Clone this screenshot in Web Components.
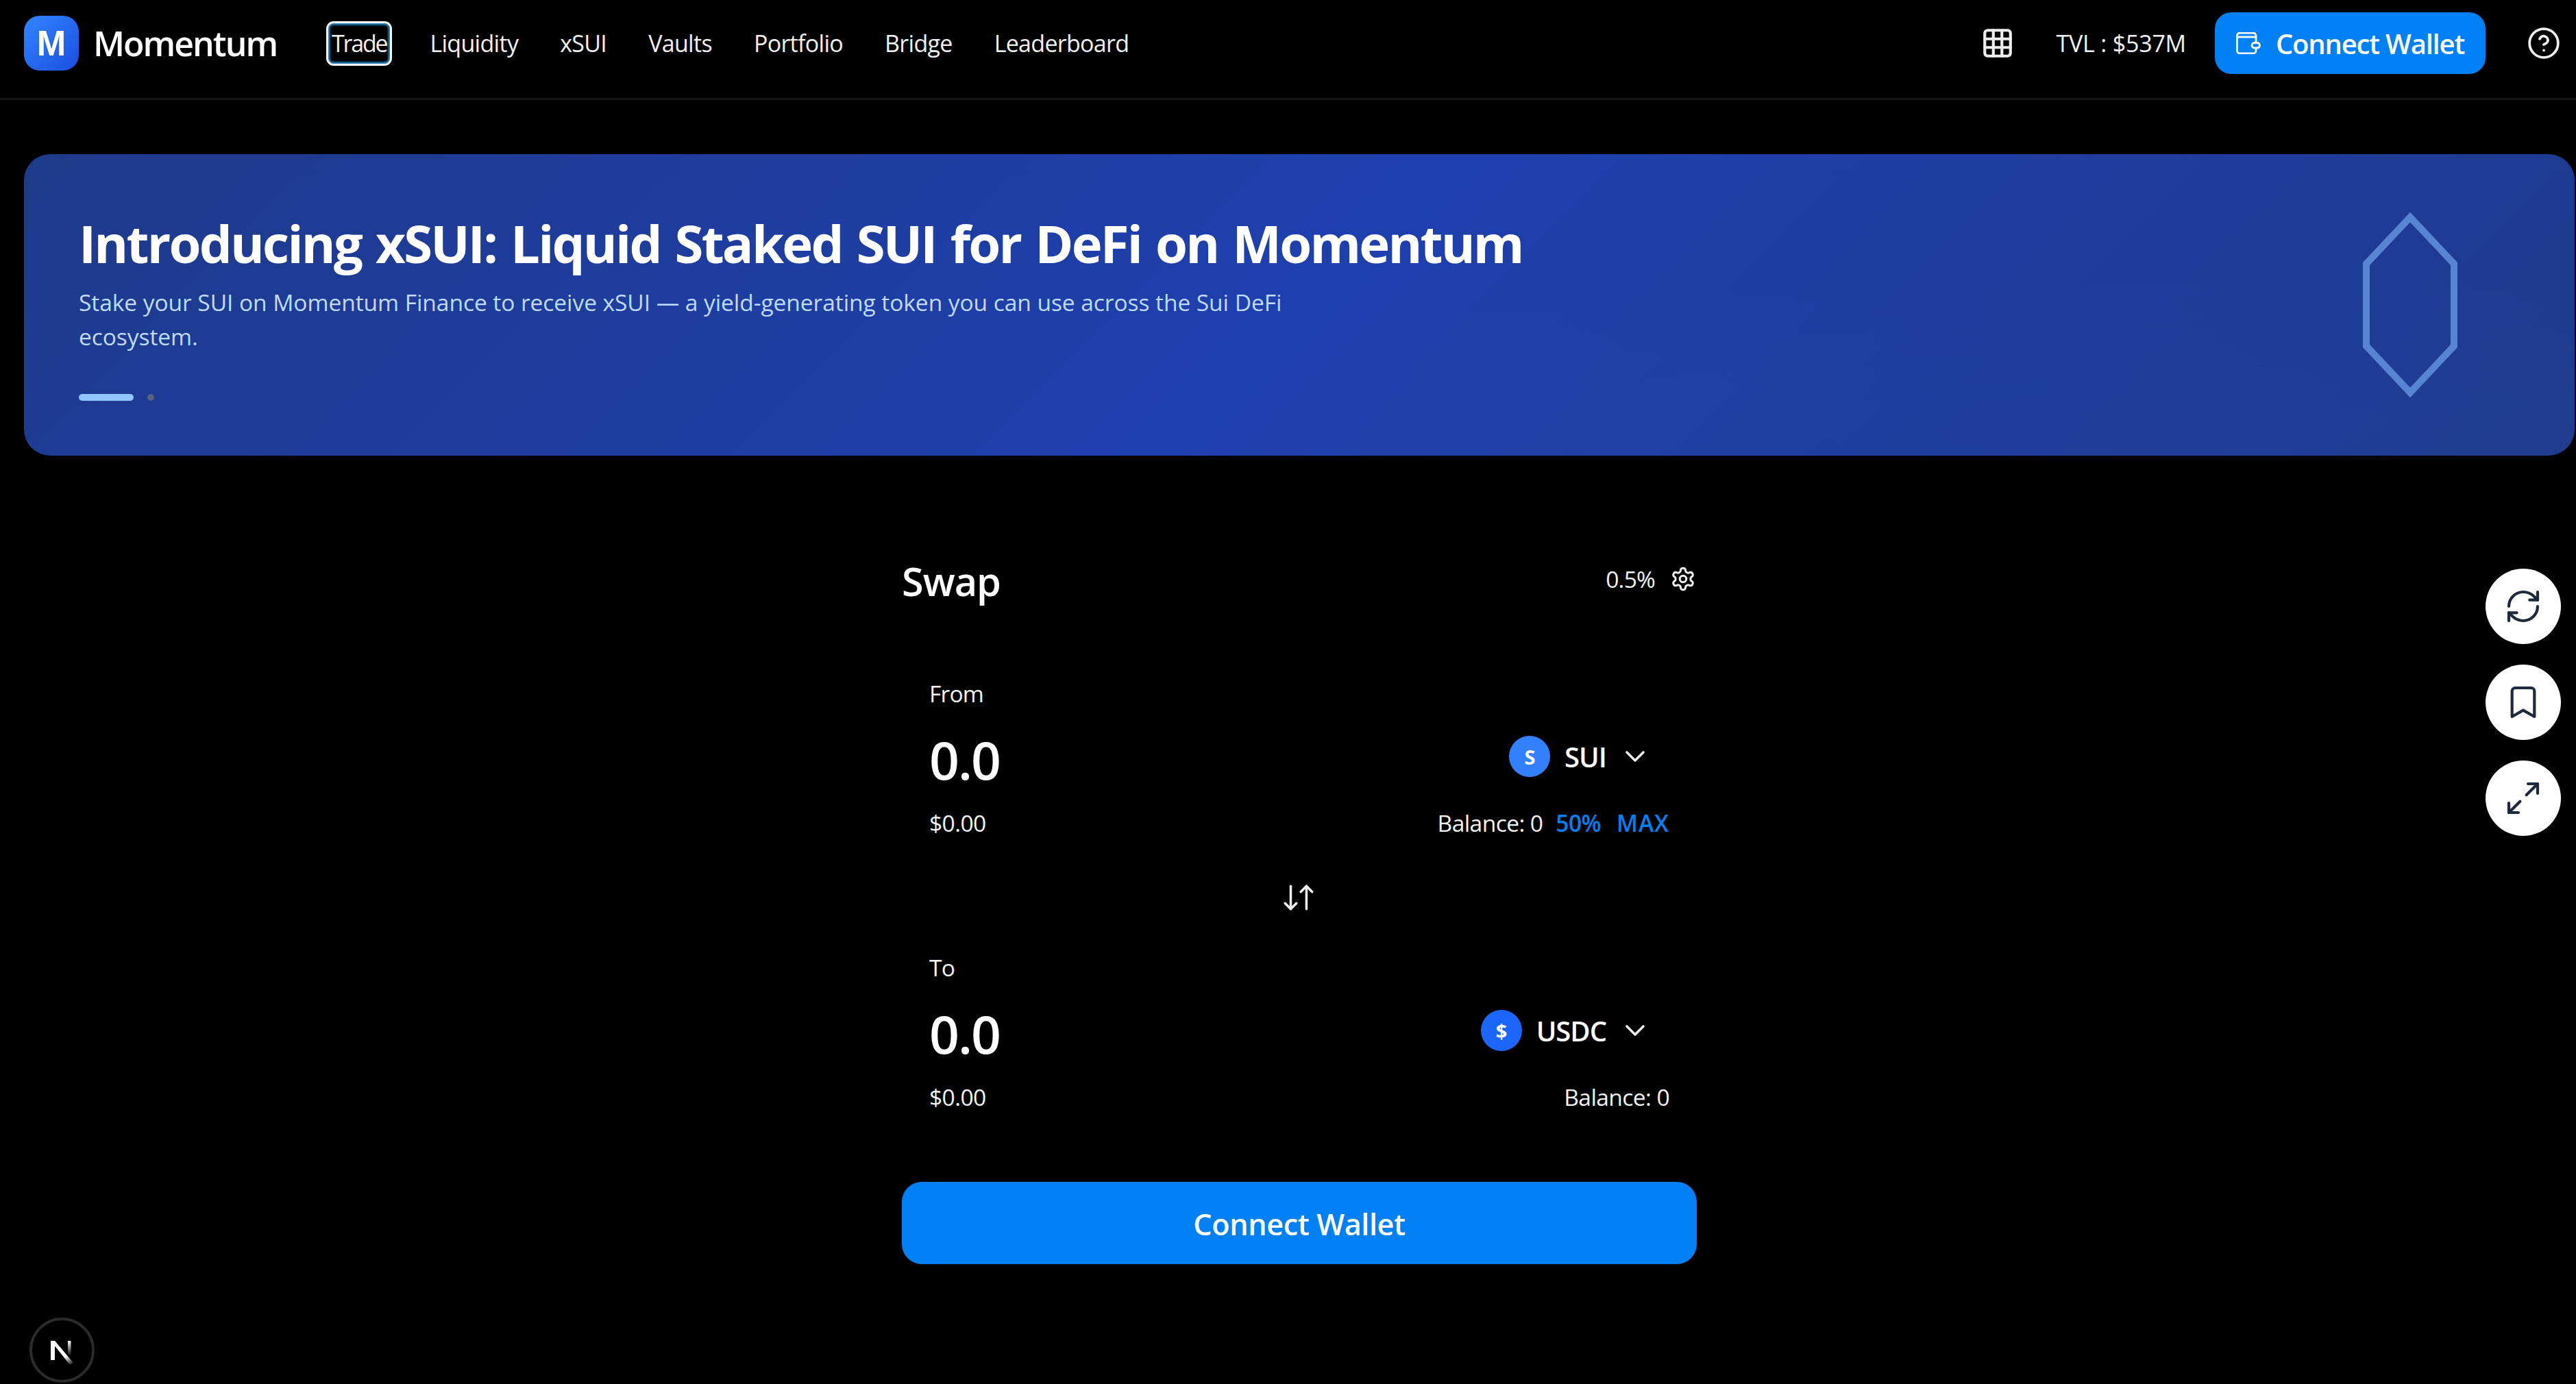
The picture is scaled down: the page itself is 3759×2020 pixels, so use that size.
<!DOCTYPE html>
<html>
<head>
<meta charset="utf-8">
<title>Momentum</title>
<style>
  html, body { margin: 0; height: 100%; background: #000; color: #fff; overflow: hidden; }
  body { font-family: "Open Sans", "Noto Sans", sans-serif; }
</style>
</head>
<body>
<app-header></app-header>
<promo-banner></promo-banner>
<swap-card></swap-card>
<side-tools></side-tools>
<dev-badge></dev-badge>

<script>
// small helper so every icon shares the same svg attributes
const icon = (size, body, width = 2) => `<svg xmlns="http://www.w3.org/2000/svg" width="${size}" height="${size}" viewBox="0 0 24 24" fill="none" stroke="currentColor" stroke-width="${width}" stroke-linecap="round" stroke-linejoin="round">${body}</svg>`;

class AppHeader extends HTMLElement {
  connectedCallback() {
    this.attachShadow({ mode: 'open' });
    this.shadowRoot.innerHTML = `
      <style>
        :host { display: flex; align-items: center; height: 126px; padding: 0 22px 17px 35px; border-bottom: 3px solid #161616; }
        .brand { display: flex; align-items: center; gap: 21px; width: 449px; flex: none; }
        .logo { width: 80px; height: 80px; border-radius: 23px; background: linear-gradient(135deg, #3385ff, #1a4fe0); display: flex; align-items: center; justify-content: center; font-size: 51px; font-weight: 700; font-family: "Liberation Sans", sans-serif; }
        .name { font-size: 50px; font-weight: 600; letter-spacing: -2px; }
        nav { display: flex; align-items: center; gap: 61px; font-size: 34px; color: #f1f1f1; letter-spacing: -.7px; }
        nav a.on { outline: 3px solid #fff; box-shadow: inset 0 0 0 2px #2a7ab0, inset 0 0 0 4px #07304d; border-radius: 8px; padding: 0 5px; margin: 0 -3px 0 -5px; height: 59px; line-height: 59px; letter-spacing: -2.2px; }
        .right { margin-left: auto; display: flex; align-items: center; }
        .grid { display: flex; color: #eee; }
        .tvl { font-size: 34px; margin-left: 61px; color: #f1f1f1; letter-spacing: -.2px; }
        .connect { margin-left: 42px; width: 395px; height: 90px; border-radius: 24px; background: #0080f5; display: flex; align-items: center; justify-content: center; gap: 22px; font-size: 40px; font-weight: 600; letter-spacing: -1.2px; }
        .help { margin-left: 60px; display: flex; color: #eee; }
      </style>
      <div class="brand"><div class="logo">M</div><div class="name">Momentum</div></div>
      <nav>
        <a class="on">Trade</a><a>Liquidity</a><a>xSUI</a><a>Vaults</a><a>Portfolio</a><a>Bridge</a><a>Leaderboard</a>
      </nav>
      <div class="right">
        <span class="grid">${icon(50, '<rect x="3" y="3" width="18" height="18" rx="2"/><path d="M3 9h18M3 15h18M9 3v18M15 3v18"/>', 2)}</span>
        <span class="tvl">TVL : $537M</span>
        <div class="connect">
          <svg width="36" height="32" viewBox="0 0 36 32" fill="none" stroke="#fff" stroke-width="2.8" stroke-linejoin="round"><path d="M29 15V5a4 4 0 0 0-4-4H5.400a4 4 0 0 0-4 4v22a4 4 0 0 0 4 4H25a4 4 0 0 0 4-4v-4"/><path d="M1.400 7H29"/><rect x="23" y="15.500" width="11.500" height="7.500" rx="3.700"/></svg>
          Connect Wallet
        </div>
        <span class="help">${icon(50, '<circle cx="12" cy="12" r="10"/><path d="M9.100 9a3 3 0 0 1 5.800 1c0 2-3 3-3 3"/><path d="M12 17h.01"/>', 1.8)}</span>
      </div>
    `;
  }
}

class PromoBanner extends HTMLElement {
  connectedCallback() {
    this.attachShadow({ mode: 'open' });
    this.shadowRoot.innerHTML = `
      <style>
        :host { display: flex; box-sizing: border-box; height: 440px; margin: 79px 2px 0 35px; padding: 0 80px; border-radius: 38px; align-items: center; justify-content: space-between; background: radial-gradient(ellipse at 85% 90%, rgba(59,130,246,.04), transparent 40%), linear-gradient(135deg, #1e3a8a 0%, #1e40af 50%, #1e3a8a 100%); }
        .copy { align-self: flex-start; padding-top: 80px; }
        h1 { margin: 0; font-size: 76px; font-weight: 700; line-height: 100px; letter-spacing: -2.8px; word-spacing: 4px; white-space: nowrap; }
        p { margin: 11px 0 0; width: 1843px; font-size: 33.6px; line-height: 50px; color: #bfdbfe; letter-spacing: -.09px; }
        .dots { display: flex; gap: 20px; margin-top: 59px; }
        .dots i { display: block; height: 10px; width: 10px; border-radius: 5px; background: #56627f; }
        .dots i.on { width: 80px; background: #93c5fd; }
        svg { margin-right: 91px; flex: none; }
      </style>
      <div class="copy">
        <h1>Introducing xSUI: Liquid Staked SUI for DeFi on Momentum</h1>
        <p>Stake your SUI on Momentum Finance to receive xSUI — a yield-generating token you can use across the Sui DeFi ecosystem.</p>
        <div class="dots"><i class="on"></i><i></i></div>
      </div>
      <svg width="138" height="270" viewBox="0 0 138 270" fill="none"><path d="M69 7 133 75V195L69 263 5 195V75Z" stroke="#5785d4" stroke-width="10"/></svg>
    `;
  }
}

class TokenRow extends HTMLElement {
  connectedCallback() {
    const label = this.getAttribute('label');
    const sym = this.getAttribute('symbol');
    const glyph = this.getAttribute('glyph');
    const color = this.getAttribute('color');
    this.attachShadow({ mode: 'open' });
    this.shadowRoot.innerHTML = `
      <style>
        :host { display: block; padding: 0 40px; }
        .label { font-size: 33.6px; line-height: 50px; color: #f3f3f3; letter-spacing: -.8px; }
        .mid { display: flex; justify-content: space-between; align-items: center; margin-top: 26px; height: 90px; }
        .amount { font-size: 76.8px; font-weight: 600; letter-spacing: -2px; }
        .token { display: flex; align-items: center; font-size: 40px; font-weight: 600; letter-spacing: -1px; margin: -8px 26px 0 0; }
        .coin { width: 60px; height: 60px; border-radius: 50%; background: ${color}; display: flex; align-items: center; justify-content: center; font-size: 29px; font-weight: 700; margin-right: 21px; }
        svg { margin-left: 18px; color: #eee; }
        .foot { display: flex; justify-content: space-between; margin-top: 23px; font-size: 33.6px; line-height: 50px; color: #f3f3f3; letter-spacing: -.6px; }
      </style>
      <div class="label">${label}</div>
      <div class="mid">
        <div class="amount">0.0</div>
        <div class="token"><span class="coin">${glyph}</span>${sym}${icon(48, '<path d="m6 9 6 6 6-6"/>', 1.8)}</div>
      </div>
      <div class="foot"><span>$0.00</span><span><slot></slot></span></div>
    `;
  }
}

class SwapCard extends HTMLElement {
  connectedCallback() {
    this.attachShadow({ mode: 'open' });
    this.shadowRoot.innerHTML = `
      <style>
        :host { display: block; width: 1160px; margin: 0 0 0 1316px; padding-top: 150px; }
        .head { display: flex; justify-content: space-between; align-items: flex-start; height: 100px; }
        .title { font-size: 57.6px; font-weight: 600; line-height: 76px; letter-spacing: -1px; margin-top: -5px; }
        .slip { display: flex; align-items: center; gap: 22px; font-size: 33.6px; letter-spacing: -.8px; color: #f3f3f3; margin-top: 7px; }
        .slip svg { margin-right: 1px; }
        .rows { margin-top: 72px; }
        .flip { display: flex; justify-content: center; color: #eee; margin: 59px 0 52px; }
        .cta { margin-top: 99px; height: 118px; padding-top: 2px; border-radius: 29px; background: #0080f5; display: flex; align-items: center; justify-content: center; font-size: 43.2px; font-weight: 600; letter-spacing: -.4px; }
        .quick { color: #0080f5; font-weight: 600; margin-left: 19px; }
        .quick + .quick { margin-left: 23px; letter-spacing: 1px; }
      </style>
      <div class="head">
        <div class="title">Swap</div>
        <div class="slip">0.5%${icon(38, '<path d="M12.220 2h-.44a2 2 0 0 0-2 2v.18a2 2 0 0 1-1 1.730l-.43.250a2 2 0 0 1-2 0l-.15-.08a2 2 0 0 0-2.730.730l-.22.380a2 2 0 0 0 .730 2.730l.150.100a2 2 0 0 1 1 1.720v.510a2 2 0 0 1-1 1.740l-.15.090a2 2 0 0 0-.730 2.730l.220.380a2 2 0 0 0 2.730.730l.150-.08a2 2 0 0 1 2 0l.430.250a2 2 0 0 1 1 1.730V20a2 2 0 0 0 2 2h.440a2 2 0 0 0 2-2v-.18a2 2 0 0 1 1-1.730l.430-.25a2 2 0 0 1 2 0l.150.080a2 2 0 0 0 2.730-.73l.220-.39a2 2 0 0 0-.73-2.730l-.15-.08a2 2 0 0 1-1-1.740v-.5a2 2 0 0 1 1-1.740l.150-.09a2 2 0 0 0 .730-2.730l-.22-.38a2 2 0 0 0-2.730-.73l-.15.080a2 2 0 0 1-2 0l-.43-.25a2 2 0 0 1-1-1.730V4a2 2 0 0 0-2-2z"/><circle cx="12" cy="12" r="3"/>', 1.9)}</div>
      </div>
      <div class="rows">
        <token-row label="From" symbol="SUI" glyph="S" color="#3381ff">Balance: 0<span class="quick">50%</span><span class="quick">MAX</span></token-row>
      </div>
      <div class="flip">${icon(50, '<path d="M6 4v16"/><path d="m2 16 4 4 4-4"/><path d="M17 20V4"/><path d="m13 8 4-4 4 4"/>', 1.7)}</div>
      <token-row label="To" symbol="USDC" glyph="$" color="#1a66ff">Balance: 0</token-row>
      <div class="cta">Connect Wallet</div>
    `;
  }
}

class SideTools extends HTMLElement {
  connectedCallback() {
    this.attachShadow({ mode: 'open' });
    this.shadowRoot.innerHTML = `
      <style>
        :host { position: absolute; left: 3627px; top: 830px; display: flex; flex-direction: column; gap: 30px; }
        div { width: 110px; height: 110px; border-radius: 50%; background: #fff; color: #1e293b; display: flex; align-items: center; justify-content: center; }
      </style>
      <div>${icon(56, '<path d="M3 12a9 9 0 0 1 9-9 9.750 9.750 0 0 1 6.740 2.740L21 8"/><path d="M21 3v5h-5"/><path d="M21 12a9 9 0 0 1-9 9 9.750 9.750 0 0 1-6.740-2.740L3 16"/><path d="M8 16H3v5"/>', 1.8)}</div>
      <div>${icon(56, '<path d="m19 21-7-4-7 4V5a2 2 0 0 1 2-2h10a2 2 0 0 1 2 2z"/>', 1.8)}</div>
      <div>${icon(56, '<path d="M15 3h6v6"/><path d="m21 3-7 7"/><path d="m3 21 7-7"/><path d="M9 21H3v-6"/>', 1.8)}</div>
    `;
  }
}

class DevBadge extends HTMLElement {
  connectedCallback() {
    this.attachShadow({ mode: 'open' });
    this.shadowRoot.innerHTML = `
      <style>
        :host { position: absolute; left: 43px; top: 1923px; width: 95px; height: 95px; display: block; }
      </style>
      <svg width="95" height="95" viewBox="0 0 95 95" fill="none">
        <defs>
          <linearGradient id="a" x1="40" y1="40" x2="64" y2="69" gradientUnits="userSpaceOnUse"><stop offset=".55" stop-color="#fff"/><stop offset="1" stop-color="#fff" stop-opacity="0"/></linearGradient>
          <linearGradient id="b" x1="0" y1="34" x2="0" y2="56" gradientUnits="userSpaceOnUse"><stop stop-color="#fff"/><stop offset="1" stop-color="#fff" stop-opacity="0"/></linearGradient>
        </defs>
        <circle cx="47.500" cy="47.500" r="45.500" fill="#000" stroke="#2a2a2a" stroke-width="4"/>
        <rect x="31" y="34" width="6" height="28" fill="#fff"/>
        <path d="M31 34h6L64 66l-5 3Z" fill="url(#a)"/>
        <rect x="56" y="34" width="4.500" height="22" fill="url(#b)"/>
      </svg>
    `;
  }
}

customElements.define('app-header', AppHeader);
customElements.define('promo-banner', PromoBanner);
customElements.define('token-row', TokenRow);
customElements.define('swap-card', SwapCard);
customElements.define('side-tools', SideTools);
customElements.define('dev-badge', DevBadge);
</script>
</body>
</html>
